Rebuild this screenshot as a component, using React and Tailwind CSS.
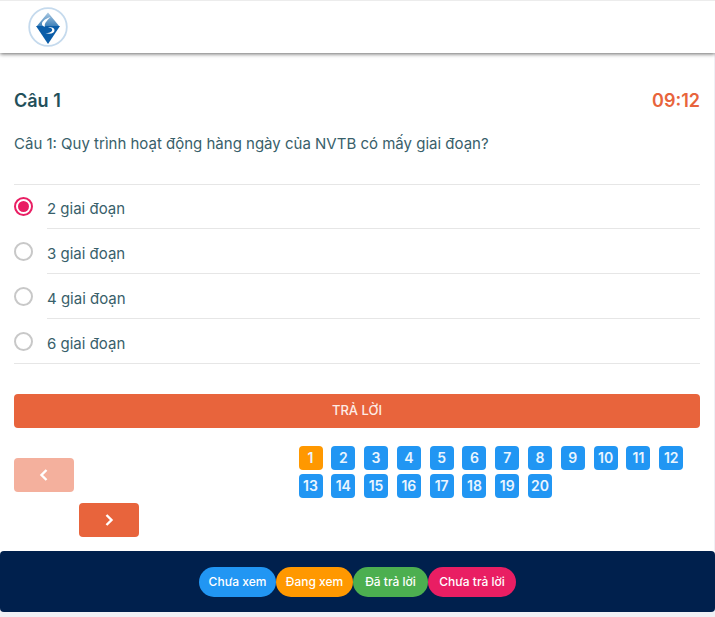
import { useState } from 'react';

const answers = ['2 giai đoạn', '3 giai đoạn', '4 giai đoạn', '6 giai đoạn'];
const questions = Array.from({ length: 20 }, (_, i) => i + 1);
const legend = [
  { label: 'Chưa xem', width: 'w-[77px]', color: 'bg-[#2196f3]' },
  { label: 'Đang xem', width: 'w-[77px]', color: 'bg-[#ff9800]' },
  { label: 'Đã trả lời', width: 'w-[75px]', color: 'bg-[#4caf50]' },
  { label: 'Chưa trả lời', width: 'w-[88px]', color: 'bg-[#e91e63]' },
];

function Logo() {
  return (
    <svg viewBox="0 0 40 40" className="size-10" role="img" aria-label="Logo">
      <defs>
        <linearGradient id="top" x1="0" y1="0" x2="0" y2="1">
          <stop offset="0" stopColor="#a9c8e2" />
          <stop offset="1" stopColor="#3c7fb8" />
        </linearGradient>
      </defs>
      <circle cx="20" cy="20" r="18.800" fill="#fff" stroke="#c5daed" strokeWidth="1.8" />
      <path d="M20 5.500 31.500 19.500h-23z" fill="url(#top)" />
      <path d="M8 19h24L20 37z" fill="#0b5da8" />
      <path d="M22.500 10c-6 2-9.500 5-8.300 8 .5 1.200 1.800 1.700 3 1.700-1.400-2.500.8-5.200 5.300-9.700z" fill="#fff" />
      <path d="M20 20c3.500.8 4.800 2 4 3.800-.7 1.500-3 2.300-6.500 2.500 5.500 1.200 9-.2 9-3 0-2.200-2.500-3.300-6.500-3.300z" fill="#fff" />
    </svg>
  );
}

function Chevron({ path }) {
  return (
    <svg viewBox="0 0 12 14" className="h-[14px] w-3" fill="none" stroke="currentColor" strokeWidth="2.4" aria-hidden="true">
      <path d={path} />
    </svg>
  );
}

export default function App() {
  const [selected, setSelected] = useState(0);
  const [current, setCurrent] = useState(1);

  return (
    <div className="min-h-screen bg-[#f0f0f5] font-['Inter','Noto_Sans',sans-serif] text-[#38606a]">
      <header className="relative z-10 flex h-[53px] items-center border-t border-[#ececec] bg-white px-7 shadow-[0_1px_4px_rgba(0,0,0,0.6)]">
        <Logo />
      </header>

      <main className="mr-px bg-white px-[14px] pt-[34px] pb-[14px]">
        <div className="flex items-center justify-between text-lg leading-7 font-semibold">
          <h1 className="text-[#23505a]">Câu 1</h1>
          <time className="text-[#e8643c]">09:12</time>
        </div>

        <fieldset className="mt-[17px]">
          <legend className="mb-7 text-[15px] leading-6">Câu 1: Quy trình hoạt động hàng ngày của NVTB có mấy giai đoạn?</legend>
          <div className="border-y border-[#e6e6e6]">
            {answers.map((answer, i) => (
              <label key={answer} className="group flex h-[45px] cursor-pointer gap-[14px] first:h-11 last:h-11">
                <input
                  type="radio"
                  name="answer"
                  checked={selected === i}
                  onChange={() => setSelected(i)}
                  className="mt-[13px] grid size-[19px] shrink-0 appearance-none place-content-center rounded-full border-2 border-[#c8c8c8] before:size-[11px] before:rounded-full checked:border-[#e91e63] checked:before:bg-[#e91e63] group-first:mt-3"
                />
                <span className="flex-1 border-b border-[#e6e6e6] pt-[13px] text-[15px] leading-6 group-first:pt-3 group-last:border-b-0">{answer}</span>
              </label>
            ))}
          </div>
        </fieldset>

        <button type="button" className="mt-[30px] flex h-[34px] w-full items-center justify-center rounded bg-[#e8643c] text-[13px] font-medium text-[#fdece6]">
          TRẢ LỜI
        </button>

        <div className="mt-[18px] grid grid-cols-[5fr_7fr] pr-2">
          <div className="mt-3 grid grid-cols-[60px_60px] content-start gap-x-[5px] gap-y-[11px]">
            <button type="button" disabled aria-label="Câu trước" className="flex h-[34px] items-center justify-center rounded bg-[#f4b09d] text-white">
              <Chevron path="M8.500 2 3.500 7l5 5" />
            </button>
            <button type="button" aria-label="Câu sau" className="col-start-2 row-start-2 flex h-[34px] items-center justify-center rounded bg-[#e8643c] text-white">
              <Chevron path="m3.500 2 5 5-5 5" />
            </button>
          </div>
          <nav aria-label="Danh sách câu hỏi" className="grid grid-cols-12 content-start gap-y-1 pl-[2px]">
            {questions.map((n) => (
              <button
                key={n}
                type="button"
                onClick={() => setCurrent(n)}
                className={`flex size-6 items-center justify-center rounded text-sm font-semibold text-[#eaf5ff] ${n === current ? 'bg-[#ff9800]' : 'bg-[#2196f3]'}`}
              >
                {n}
              </button>
            ))}
          </nav>
        </div>
      </main>

      <div className="bg-gradient-to-b from-white from-50% to-[#f0f0f5] to-50%">
        <footer className="flex min-h-[61px] items-center justify-center rounded bg-[#00204d]">
          {legend.map(({ label, width, color }) => (
            <span key={label} className={`flex h-[30px] items-center justify-center rounded-full text-xs font-medium whitespace-nowrap text-white ${width} ${color}`}>
              {label}
            </span>
          ))}
        </footer>
      </div>
    </div>
  );
}
